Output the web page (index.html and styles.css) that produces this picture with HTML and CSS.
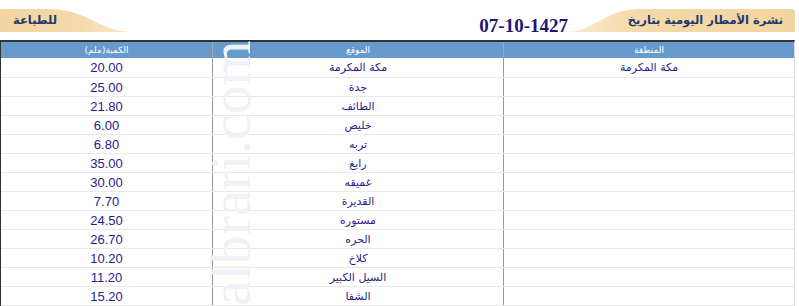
FILE: index.html
```html
<!DOCTYPE html>
<html lang="ar" dir="rtl">
<head>
<meta charset="utf-8">
<title>نشرة الأمطار اليومية</title>
<link rel="stylesheet" href="styles.css">
</head>
<body>
<div class="page">
  <div class="topbar">
    <div class="tab tab-title">
      <svg class="tab-bg" viewBox="0 0 229 23" preserveAspectRatio="none" aria-hidden="true">
        <defs>
          <linearGradient id="gr" x1="0" y1="0" x2="1" y2="0">
            <stop offset="0" stop-color="#fbecd3"/>
            <stop offset="0.3" stop-color="#f4d9aa"/>
            <stop offset="1" stop-color="#f2d5a2"/>
          </linearGradient>
        </defs>
        <path d="M0,23 C28,23 38,0 75,0 L226,0 Q229,0 229,3 L229,23 Z" fill="url(#gr)"/>
      </svg>
      <span class="tab-text">نشرة الأمطار اليومية بتاريخ</span>
    </div>
    <div class="date">07-10-1427</div>
    <div class="spacer"></div>
    <div class="tab tab-print">
      <svg class="tab-bg" viewBox="0 0 135 23" preserveAspectRatio="none" aria-hidden="true">
        <defs>
          <linearGradient id="gl" x1="0" y1="0" x2="1" y2="0">
            <stop offset="0" stop-color="#f2d5a2"/>
            <stop offset="0.6" stop-color="#f4d9aa"/>
            <stop offset="1" stop-color="#fbecd3"/>
          </linearGradient>
        </defs>
        <path d="M0,0 L48,0 C88,0 98,23 135,23 L0,23 Z" fill="url(#gl)"/>
      </svg>
      <span class="tab-text print-text">للطباعة</span>
    </div>
  </div>

  <div class="grid">
    <div class="row head">
      <div class="cell c-area">المنطقة</div>
      <div class="cell c-site">الموقع</div>
      <div class="cell c-qty">الكمية(ملم)</div>
    </div>
    <div class="row first"><div class="cell c-area">مكة المكرمة</div><div class="cell c-site">مكة المكرمة</div><div class="cell c-qty num">20.00</div></div>
    <div class="row"><div class="cell c-area"></div><div class="cell c-site">جدة</div><div class="cell c-qty num">25.00</div></div>
    <div class="row"><div class="cell c-area"></div><div class="cell c-site">الطائف</div><div class="cell c-qty num">21.80</div></div>
    <div class="row"><div class="cell c-area"></div><div class="cell c-site">خليص</div><div class="cell c-qty num">6.00</div></div>
    <div class="row"><div class="cell c-area"></div><div class="cell c-site">تربه</div><div class="cell c-qty num">6.80</div></div>
    <div class="row"><div class="cell c-area"></div><div class="cell c-site">رابغ</div><div class="cell c-qty num">35.00</div></div>
    <div class="row"><div class="cell c-area"></div><div class="cell c-site">غميقه</div><div class="cell c-qty num">30.00</div></div>
    <div class="row"><div class="cell c-area"></div><div class="cell c-site">القديرة</div><div class="cell c-qty num">7.70</div></div>
    <div class="row"><div class="cell c-area"></div><div class="cell c-site">مستوره</div><div class="cell c-qty num">24.50</div></div>
    <div class="row"><div class="cell c-area"></div><div class="cell c-site">الحره</div><div class="cell c-qty num">26.70</div></div>
    <div class="row"><div class="cell c-area"></div><div class="cell c-site">كلاخ</div><div class="cell c-qty num">10.20</div></div>
    <div class="row"><div class="cell c-area"></div><div class="cell c-site">السيل الكبير</div><div class="cell c-qty num">11.20</div></div>
    <div class="row"><div class="cell c-area"></div><div class="cell c-site">الشفا</div><div class="cell c-qty num">15.20</div></div>
  </div>

  <div class="watermark" dir="ltr">albrari.com</div>
</div>
</body>
</html>
```

FILE: styles.css
```css
html, body {
  margin: 0;
  padding: 0;
  background: #ffffff;
}

body {
  font-family: "DejaVu Sans", "Liberation Sans", sans-serif;
  overflow: hidden;
}

.page {
  position: relative;
  width: 795px;
  height: 306px;
  margin-left: 0;
  margin-right: auto;
  overflow: hidden;
}

.topbar {
  display: flex;
  align-items: flex-start;
  height: 40px;
  padding-top: 9px;
  box-sizing: border-box;
}

.tab {
  position: relative;
  height: 23px;
  flex: none;
}

.tab-bg {
  position: absolute;
  top: 0;
  left: 0;
  width: 100%;
  height: 100%;
  z-index: 0;
}

.tab-title {
  width: 229px;
}

.tab-print {
  width: 135px;
}

.tab-text {
  position: relative;
  z-index: 1;
  display: block;
  font-family: "DejaVu Sans", sans-serif;
  font-weight: bold;
  font-size: 11.5px;
  line-height: 23px;
  color: #22396b;
  padding-right: 12px;
  white-space: nowrap;
}

.print-text {
  padding-right: 0;
  text-align: left;
  padding-left: 13px;
}

.date {
  flex: none;
  margin-right: -2px;
  padding-top: 5px;
  font-family: "Liberation Serif", serif;
  font-weight: bold;
  font-size: 19px;
  line-height: 23px;
  color: #1c1670;
  direction: ltr;
}

.spacer {
  flex: 1;
}

.grid {
  width: 795px;
  box-sizing: border-box;
  border-top: 2px solid #333333;
  border-left: 1px solid #333333;
  border-right: 1px solid #dddddd;
}

.row {
  display: grid;
  grid-template-columns: 291px 291px 211px;
  height: 18px;
  border-bottom: 1px solid #e8e8e8;
}

.row.first {
  height: 19px;
}

.row.head {
  height: 16px;
  border-bottom: 0;
  background: #6699cc;
}

.cell {
  display: flex;
  align-items: center;
  justify-content: center;
  font-size: 11px;
  color: #2b1c8c;
  white-space: nowrap;
}

.c-area,
.c-site {
  border-left: 1px solid #999999;
}

.head .cell {
  color: #ffffff;
  font-size: 9px;
}

.head .c-area,
.head .c-site {
  border-left-color: #a6a6a6;
}

.num {
  font-family: "Liberation Sans", Arial, sans-serif;
  font-size: 13px;
  color: #2a1a8c;
}

.watermark {
  position: absolute;
  top: 306px;
  left: 202px;
  transform-origin: 0 0;
  transform: rotate(-90deg);
  font-family: "Liberation Serif", serif;
  font-size: 58px;
  line-height: 58px;
  color: #eef1f5;
  white-space: nowrap;
  pointer-events: none;
}
```
